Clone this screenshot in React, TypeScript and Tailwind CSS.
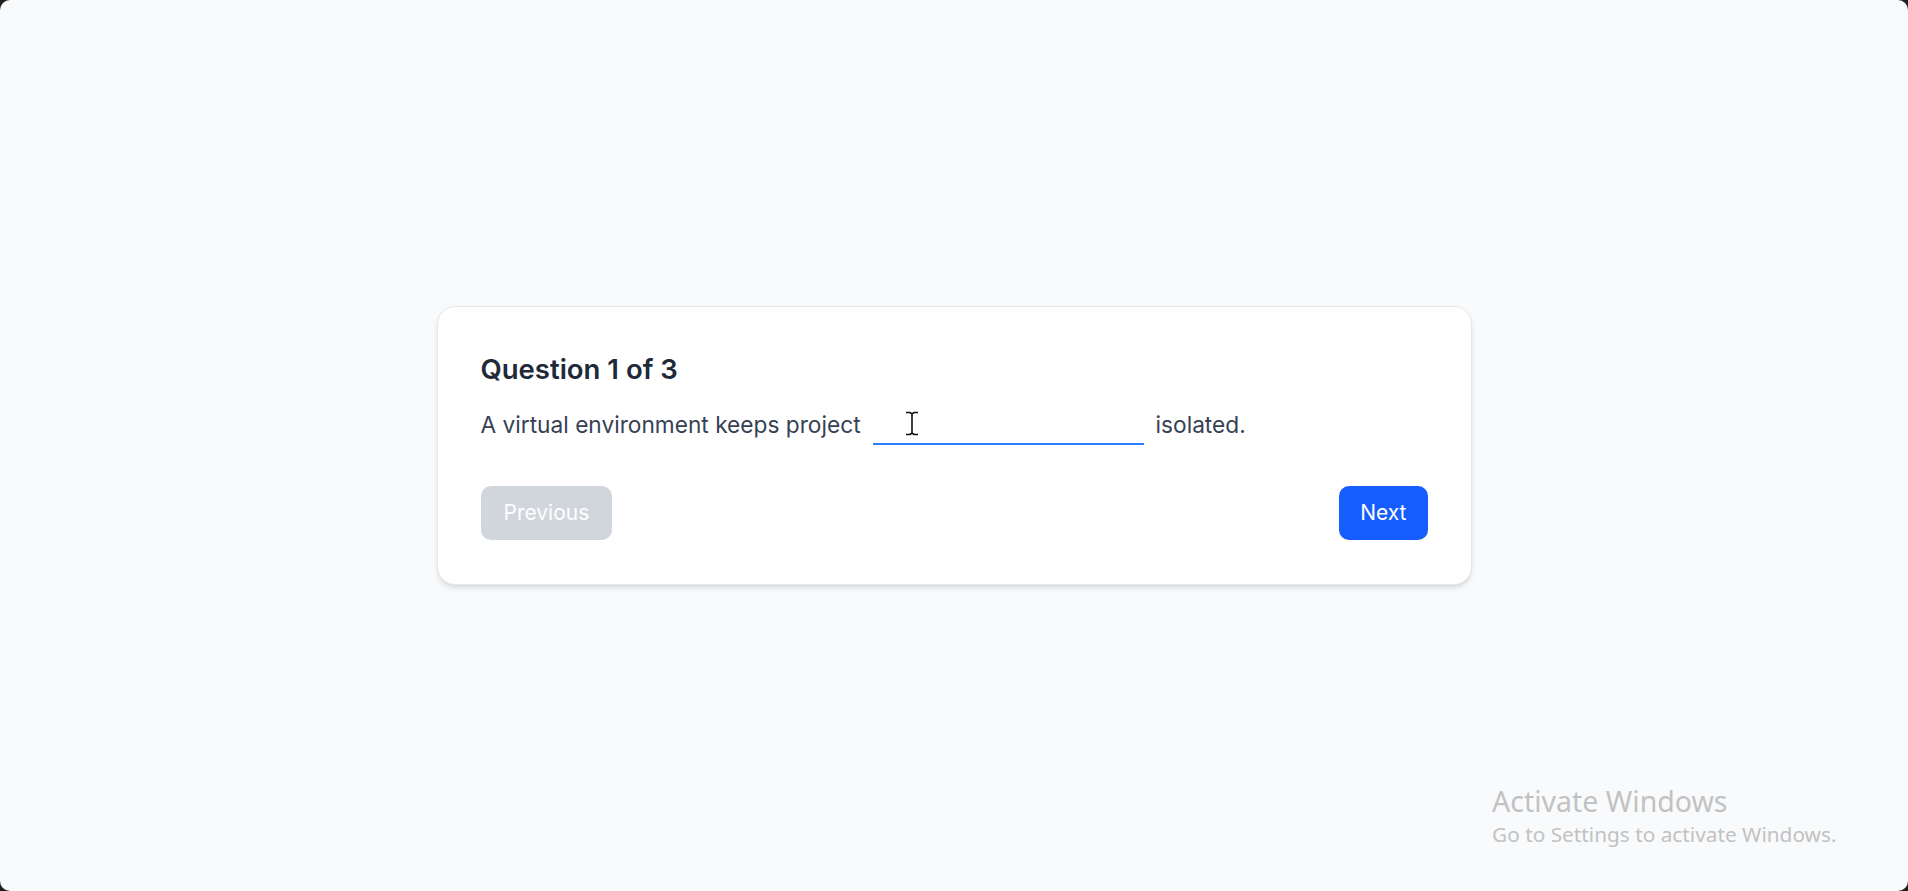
import { useState } from "react";

const font = { fontFamily: "Inter, 'Noto Sans', sans-serif" };

function IBeam() {
  return (
    <svg
      className="pointer-events-none absolute left-[32px] top-[6px]"
      width="14"
      height="25"
      viewBox="0 0 14 25"
    >
      <path
        d="M1 1.5h4l2 1.5 2-1.5h4M7 3v19M1 23.5h4l2-1.5 2 1.5h4"
        fill="none"
        stroke="#fff"
        strokeWidth="3.2"
      />
      <path
        d="M1 1.5h4l2 1.5 2-1.5h4M7 3v19M1 23.5h4l2-1.5 2 1.5h4"
        fill="none"
        stroke="#111"
        strokeWidth="1.6"
      />
    </svg>
  );
}

export default function App() {
  const [answer, setAnswer] = useState("");

  return (
    <div className="flex h-[891px] bg-[#1f1f1f]">
      <div
        className="relative flex flex-1 items-center justify-center rounded-[10px] bg-gray-50"
        style={font}
      >
        <div className="w-[1035px] rounded-[18px] border border-gray-200 bg-white px-[43px] py-[44px] shadow-md">
          <h2 className="text-[27.5px] leading-[36px] font-semibold text-gray-800">
            Question 1 of 3
          </h2>
          <div className="mt-[18px] flex items-center text-[22.7px] text-gray-700">
            <span>A virtual environment keeps project</span>
            <div className="relative mx-3">
              <input
                value={answer}
                onChange={(e) => setAnswer(e.target.value)}
                className="h-10 w-[271px] border-b-2 border-blue-500 bg-transparent px-2 outline-none"
              />
              <IBeam />
            </div>
            <span>isolated.</span>
          </div>
          <div className="mt-[41px] flex items-center justify-between">
            <button
              disabled
              className="h-[54px] rounded-[10px] bg-gray-300 px-[23px] text-[21px] text-white"
            >
              Previous
            </button>
            <button className="h-[54px] rounded-[10px] bg-blue-600 px-[21px] text-[21px] text-white">
              Next
            </button>
          </div>
        </div>

        <div
          className="pointer-events-none absolute left-[1492px] top-[783px] text-[#c2c2c2]"
          style={{ fontFamily: "'Noto Sans', 'Open Sans', sans-serif" }}
        >
          <div className="text-[28.5px] leading-[36px]">Activate Windows</div>
          <div className="text-[20.8px] leading-[30px]">
            Go to Settings to activate Windows.
          </div>
        </div>
      </div>
    </div>
  );
}
